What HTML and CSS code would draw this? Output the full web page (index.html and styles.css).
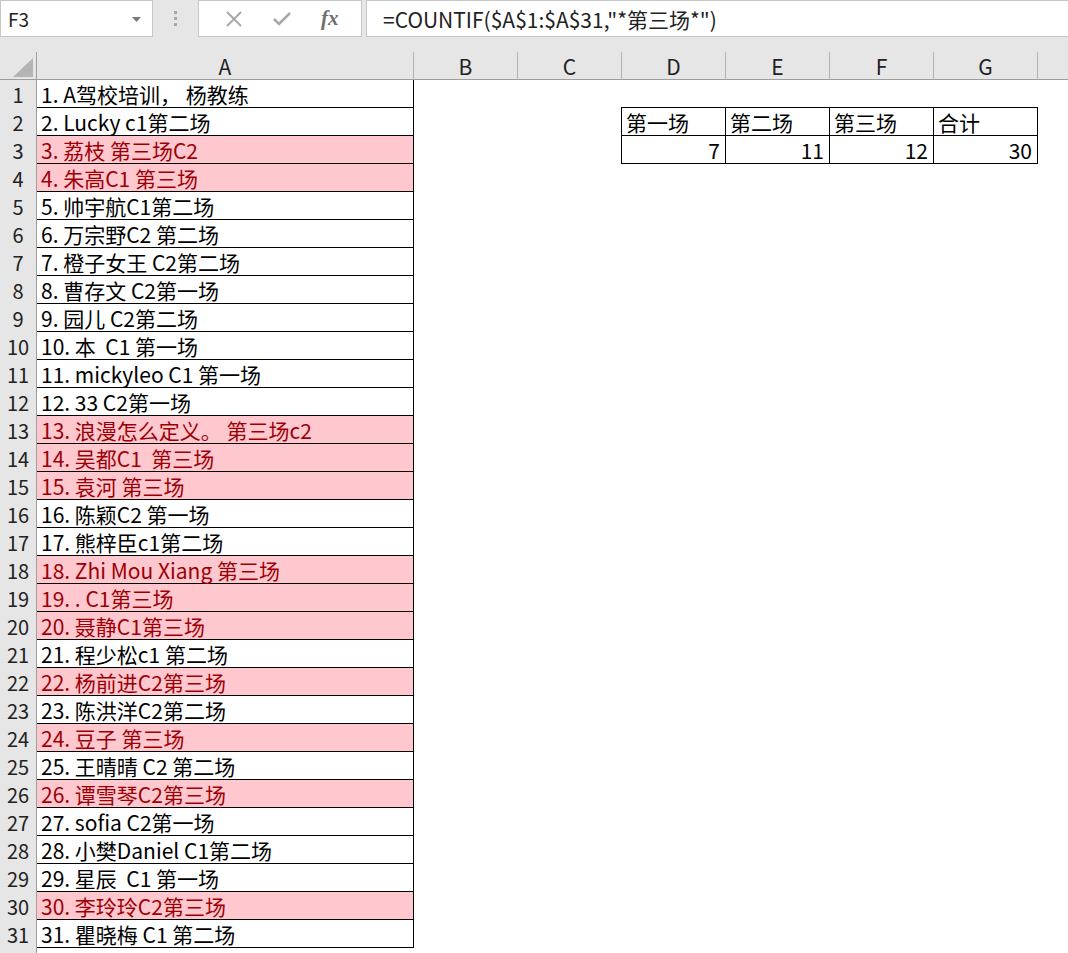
FILE: index.html
```html
<!DOCTYPE html>
<html>
<head>
    <meta charset="utf-8">
    <title>COUNTIF 第三场</title>
    <link rel="stylesheet" href="styles.css">
</head>
<body>
    <div class="toolbar">
        <div class="namebox">
            <span>F3</span>
            <svg class="dropdown" width="9" height="5" viewBox="0 0 9 5"><path d="M0 0h9L4.5 5z" fill="#7a7a7a"/></svg>
        </div>
        <div class="grip"><i></i><i></i><i></i></div>
        <div class="fx-buttons">
            <svg width="18" height="18" viewBox="0 0 18 18"><path d="M2 2L16 16M16 2L2 16" stroke="#a8a8a8" stroke-width="2" fill="none"/></svg>
            <svg width="20" height="18" viewBox="0 0 20 18"><path d="M2 9l5 5L18 3" stroke="#a8a8a8" stroke-width="2.6" fill="none"/></svg>
            <span class="fx">fx</span>
        </div>
        <div class="formula">=COUNTIF($A$1:$A$31,"*第三场*")</div>
    </div>

    <div class="sheet">
        <div class="row colheads">
            <div class="corner"><svg width="20" height="19" viewBox="0 0 20 19"><path d="M20 0V19H0z" fill="#b4b4b4"/></svg></div>
            <div class="colhead">A</div>
            <div class="colhead">B</div>
            <div class="colhead">C</div>
            <div class="colhead">D</div>
            <div class="colhead">E</div>
            <div class="colhead">F</div>
            <div class="colhead">G</div>
            <div class="colhead last"></div>
        </div>

        <div class="row"><div class="rownum">1</div><div class="cell a">1. A驾校培训， 杨教练</div></div>
        <div class="row"><div class="rownum">2</div><div class="cell a">2. Lucky c1第二场</div>
            <div class="cell t t-top t-first">第一场</div><div class="cell t t-top">第二场</div><div class="cell t t-top">第三场</div><div class="cell t t-top">合计</div></div>
        <div class="row"><div class="rownum">3</div><div class="cell a bad">3. 荔枝 第三场C2</div>
            <div class="cell t t-first num">7</div><div class="cell t num">11</div><div class="cell t num">12</div><div class="cell t num">30</div></div>
        <div class="row"><div class="rownum">4</div><div class="cell a bad">4. 朱高C1 第三场</div></div>
        <div class="row"><div class="rownum">5</div><div class="cell a">5. 帅宇航C1第二场</div></div>
        <div class="row"><div class="rownum">6</div><div class="cell a">6. 万宗野C2 第二场</div></div>
        <div class="row"><div class="rownum">7</div><div class="cell a">7. 橙子女王 C2第二场</div></div>
        <div class="row"><div class="rownum">8</div><div class="cell a">8. 曹存文 C2第一场</div></div>
        <div class="row"><div class="rownum">9</div><div class="cell a">9. 园儿 C2第二场</div></div>
        <div class="row"><div class="rownum">10</div><div class="cell a">10. 本&nbsp; C1 第一场</div></div>
        <div class="row"><div class="rownum">11</div><div class="cell a">11. mickyleo C1 第一场</div></div>
        <div class="row"><div class="rownum">12</div><div class="cell a">12. 33 C2第一场</div></div>
        <div class="row"><div class="rownum">13</div><div class="cell a bad">13. 浪漫怎么定义。 第三场c2</div></div>
        <div class="row"><div class="rownum">14</div><div class="cell a bad">14. 吴都C1&nbsp; 第三场</div></div>
        <div class="row"><div class="rownum">15</div><div class="cell a bad">15. 袁河 第三场</div></div>
        <div class="row"><div class="rownum">16</div><div class="cell a">16. 陈颖C2 第一场</div></div>
        <div class="row"><div class="rownum">17</div><div class="cell a">17. 熊梓臣c1第二场</div></div>
        <div class="row"><div class="rownum">18</div><div class="cell a bad">18. Zhi Mou Xiang 第三场</div></div>
        <div class="row"><div class="rownum">19</div><div class="cell a bad">19. . C1第三场</div></div>
        <div class="row"><div class="rownum">20</div><div class="cell a bad">20. 聂静C1第三场</div></div>
        <div class="row"><div class="rownum">21</div><div class="cell a">21. 程少松c1 第二场</div></div>
        <div class="row"><div class="rownum">22</div><div class="cell a bad">22. 杨前进C2第三场</div></div>
        <div class="row"><div class="rownum">23</div><div class="cell a">23. 陈洪洋C2第二场</div></div>
        <div class="row"><div class="rownum">24</div><div class="cell a bad">24. 豆子 第三场</div></div>
        <div class="row"><div class="rownum">25</div><div class="cell a">25. 王晴晴 C2 第二场</div></div>
        <div class="row"><div class="rownum">26</div><div class="cell a bad">26. 谭雪琴C2第三场</div></div>
        <div class="row"><div class="rownum">27</div><div class="cell a">27. sofia C2第一场</div></div>
        <div class="row"><div class="rownum">28</div><div class="cell a">28. 小樊Daniel C1第二场</div></div>
        <div class="row"><div class="rownum">29</div><div class="cell a">29. 星辰&nbsp; C1 第一场</div></div>
        <div class="row"><div class="rownum">30</div><div class="cell a bad">30. 李玲玲C2第三场</div></div>
        <div class="row"><div class="rownum">31</div><div class="cell a">31. 瞿晓梅 C1 第二场</div></div>
        <div class="row"><div class="rownum"></div></div>
    </div>
</body>
</html>
```

FILE: styles.css
```css
html, body {
    margin: 0;
    height: 100%;
    overflow: hidden;
}
body {
    font-family: "Noto Sans CJK SC", sans-serif;
    font-size: 21px;
    color: #000;
    background: #fff;
}

/* formula bar */
.toolbar {
    display: flex;
    align-items: flex-start;
    height: 52px;
    background: #e6e6e6;
}
.namebox {
    box-sizing: border-box;
    width: 153px;
    height: 37px;
    border: 1px solid #c6c6c6;
    background: #fff;
    display: flex;
    align-items: center;
    justify-content: space-between;
    padding: 0 11px 0 7px;
    font-size: 19px;
    color: #222;
}
.dropdown {
    margin-top: 2px;
}
.grip {
    width: 45px;
    height: 37px;
    display: flex;
    flex-direction: column;
    align-items: center;
    justify-content: center;
    gap: 3px;
}
.grip i {
    width: 3px;
    height: 3px;
    background: #a8a8a8;
}
.fx-buttons {
    box-sizing: border-box;
    width: 164px;
    height: 37px;
    border: 1px solid #c6c6c6;
    background: #fff;
    display: flex;
    align-items: center;
    justify-content: space-around;
    padding: 0 8px 0 12px;
}
.fx {
    font-family: "Liberation Serif", serif;
    font-style: italic;
    font-weight: bold;
    font-size: 21px;
    color: #6e6e6e;
}
.formula {
    box-sizing: border-box;
    flex: 1;
    height: 37px;
    margin-left: 4px;
    border: 1px solid #c6c6c6;
    border-right: none;
    background: #fff;
    padding-left: 16px;
    display: flex;
    align-items: center;
    font-size: 21px;
    color: #222;
}

/* grid */
.row {
    display: grid;
    grid-template-columns: 37px 377px 104px 104px 104px 104px 104px 104px 1fr;
    height: 28px;
}
.row > div {
    box-sizing: border-box;
    height: 28px;
}
.corner, .colhead {
    background: #e6e6e6;
    border-right: 1px solid #b4b4b4;
    border-bottom: 1px solid #9e9e9e;
}
.corner {
    display: flex;
    justify-content: flex-end;
    align-items: flex-end;
    padding: 0 3px 2px 0;
    border-right-color: #9e9e9e;
}
.colhead {
    display: flex;
    align-items: center;
    justify-content: center;
    color: #222;
    font-size: 21px;
}
.colhead.last {
    border-right: none;
}
.rownum {
    background: #e6e6e6;
    border-right: 1px solid #9e9e9e;
    display: flex;
    align-items: center;
    justify-content: center;
    font-size: 20px;
    color: #222;
}
.cell {
    display: flex;
    align-items: center;
    padding: 0 4px;
    white-space: pre;
    border-bottom: 1px solid transparent;
}
.cell.a {
    border-right: 1px solid #000;
    border-bottom: 1px solid #000;
}
.cell.bad {
    background: #ffc7ce;
    color: #9c0006;
}

/* small summary table D2:G3 */
.cell.t {
    border-right: 1px solid #000;
    border-bottom: 1px solid #000;
}
.cell.t-first {
    grid-column: 5;
    box-shadow: -1px 0 0 #000;
}
.cell.t-top {
    box-shadow: 0 -1px 0 #000;
}
.cell.t-top.t-first {
    box-shadow: -1px 0 0 #000, 0 -1px 0 #000, -1px -1px 0 #000;
}
.cell.num {
    justify-content: flex-end;
    padding-right: 5px;
}
```
